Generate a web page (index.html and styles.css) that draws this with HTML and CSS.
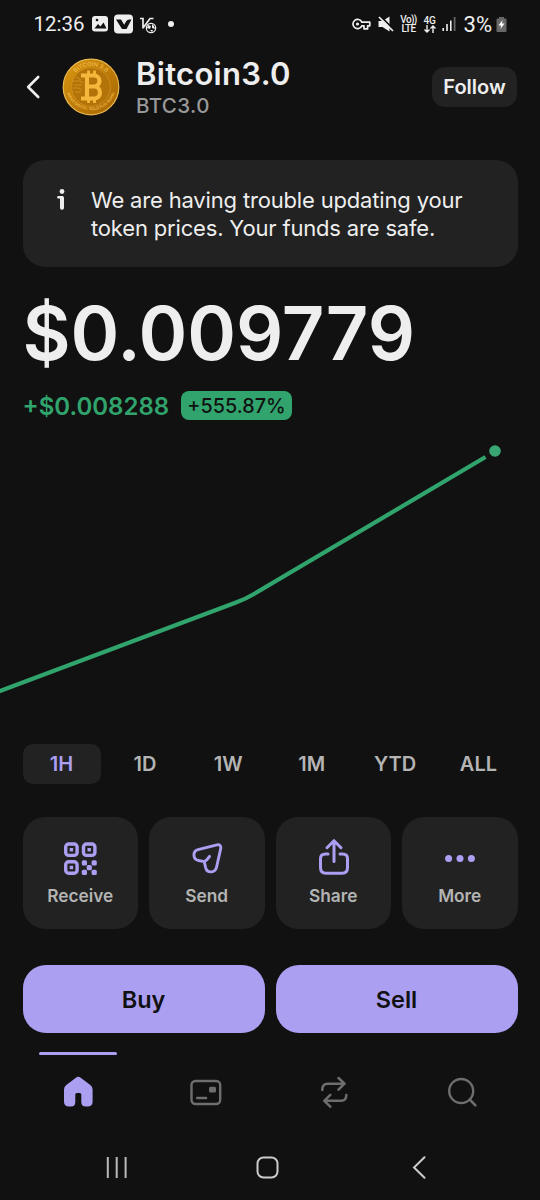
FILE: index.html
```html
<!DOCTYPE html>
<html lang="en">
<head>
    <meta charset="UTF-8">
    <meta name="viewport" content="width=device-width, initial-scale=1.0">
    <title>Bitcoin3.0</title>
    <link rel="stylesheet" href="styles.css">
</head>
<body>
    <!-- Status Bar -->
    <div class="status-bar">
        <div class="status-left">
            <span class="clock">12:36</span>
            <svg class="notifications" width="86" height="20" viewBox="0 0 86 20">
                <rect x="0" y="2" width="16" height="15.5" rx="3" fill="#eee"/>
                <path d="M2.5 14.5l3.5-4.500 2.500 2.500 3-4 3 6z" fill="#111"/>
                <circle cx="5" cy="6" r="1.300" fill="#111"/>
                <rect x="22" y="0.500" width="19" height="19" rx="4" fill="#eee"/>
                <path d="M24 5.500h5l3.200 5.300L34 7.500Q35 5.500 37.500 5.500H39.500L34.500 15H30Z" fill="#111"/>
                <path d="M48 4.500h3v10M51 14l7-9.500h3.500" fill="none" stroke="#eee" stroke-width="1.700"/>
                <circle cx="59" cy="14" r="4.700" fill="#111" stroke="#eee" stroke-width="1.200"/>
                <path d="M56 11l3 1-1 3-3-1zM60 10l2 2 1 3-3-1zM58 16h3l-1 2z" fill="#eee"/>
                <circle cx="79" cy="10" r="3" fill="#eee"/>
            </svg>
        </div>
        <div class="status-right">
            <svg class="vpn-key" width="19" height="12" viewBox="0 0 19 12">
                <path d="M9.800 4.200A4.600 4.600 0 1 0 9.800 7.800H12V10.800H15.600V7.800H17.800V4.200Z" fill="none" stroke="#eee" stroke-width="1.700" stroke-linejoin="round"/>
                <circle cx="5.500" cy="6" r="1.600" fill="#eee"/>
            </svg>
            <svg class="muted" width="16" height="16" viewBox="0 0 16 16">
                <path d="M0.500 5h4L11.500 0.500v15L4.500 11h-4z" fill="#eee"/>
                <path d="M1 -1.200L17 14.800" stroke="#111" stroke-width="1.800"/>
                <path d="M1 1L15 15" stroke="#eee" stroke-width="1.700"/>
            </svg>
            <div class="network volte"><span>Vo))</span><span>LTE</span></div>
            <div class="network">
                <span>4G</span>
                <svg width="12" height="8" viewBox="0 0 12 8">
                    <path d="M3 0v7M0.500 4.500L3 7l2.500-2.500M9 8V1M6.500 3.500L9 1l2.500 2.500" fill="none" stroke="#eee" stroke-width="1.400"/>
                </svg>
            </div>
            <svg class="signal" width="14" height="16" viewBox="0 0 14 16">
                <path d="M1.200 15v-3M5 15V8M8.800 15V4.500" stroke="#eee" stroke-width="1.600"/>
                <path d="M12.600 15V1" stroke="#666" stroke-width="1.800"/>
            </svg>
            <span class="battery-level">3%</span>
            <svg width="11" height="15" viewBox="0 0 11 15">
                <path d="M3 0h5v1.500h1.500q1 0 1 1v11.500q0 1-1 1h-8q-1 0-1-1V2.500q0-1 1-1H3z" fill="#686868"/>
                <path d="M6.500 3L2.500 8.500h2.500L4.500 12l4-5.500H6z" fill="#fff"/>
            </svg>
        </div>
    </div>

    <!-- Token Header -->
    <div class="header">
        <svg class="back" width="16" height="24" viewBox="0 0 16 24">
            <path d="M13.200 2L3.200 12l10 10" fill="none" stroke="#eee" stroke-width="2.600" stroke-linecap="round" stroke-linejoin="round"/>
        </svg>
        <svg class="coin" width="58" height="58" viewBox="0 0 58 58">
            <defs>
                <linearGradient id="gold" x1="0" y1="0" x2="1" y2="1">
                    <stop offset="0" stop-color="#dc9a12"/>
                    <stop offset="0.500" stop-color="#bd7c08"/>
                    <stop offset="1" stop-color="#a86604"/>
                </linearGradient>
                <path id="arc-top" d="M8 29a21 21 0 0 1 42 0"/>
                <path id="arc-bottom" d="M3.800 27a25.200 25.200 0 0 0 50.400 0"/>
            </defs>
            <circle cx="29" cy="29" r="27.800" fill="url(#gold)" stroke="#e9b952" stroke-width="1.200"/>
            <circle cx="29" cy="29" r="19.300" fill="#b27409" stroke="#d0931f" stroke-width="0.800"/>
            <text class="coin-text"><textPath href="#arc-top" startOffset="50%" text-anchor="middle">BITCOIN 3.0</textPath></text>
            <text class="coin-text small"><textPath href="#arc-bottom" startOffset="50%" text-anchor="middle">MAKE DIGITAL GOLD FUN AGAIN</textPath></text>
            <path d="M11 23h7l3 2M12 27h8M11 30h6l3 2M13 34h6M14 19l5 3" fill="none" stroke="#d6951f" stroke-width="0.900"/>
            <g fill="none" stroke="#f4b83c" stroke-width="4.200">
                <path d="M19 17.500H32a5.300 5.300 0 0 1 0 11H26M32 28.500a6 6 0 0 1 0 12H19M25 17.500v23"/>
                <path d="M26.500 12.500v5M32.500 12.500v5M26.500 40.500v4.500M32.500 40.500v4.500" stroke-width="2.800"/>
            </g>
        </svg>
        <div class="token-name">
            <h1>Bitcoin3.0</h1>
            <span>BTC3.0</span>
        </div>
        <button class="follow">Follow</button>
    </div>

    <!-- Main Content -->
    <div class="container">
        <div class="notice">
            <svg width="8" height="22" viewBox="0 0 8 22">
                <circle cx="5" cy="2.500" r="2.400" fill="#eee"/>
                <path d="M1.400 8.300H5V19" fill="none" stroke="#eee" stroke-width="2.600" stroke-linecap="round" stroke-linejoin="round"/>
                <path d="M5 9V18.800" stroke="#eee" stroke-width="4" stroke-linecap="round"/>
            </svg>
            <p>We are having trouble updating your<br>token prices. Your funds are safe.</p>
        </div>

        <div class="price">$0.009779</div>
        <div class="change">
            <span class="amount">+$0.008288</span>
            <span class="percent">+555.87%</span>
        </div>
    </div>

    <!-- Price Chart -->
    <svg class="chart" width="540" height="304" viewBox="0 0 540 304">
        <path d="M-4 252.500L236 162.500Q246 158.800 254 154L485.500 17" fill="none" stroke="#30a46c" stroke-width="4.200"/>
        <circle cx="495" cy="11" r="5.800" fill="#3aa674"/>
    </svg>

    <div class="container">
        <div class="ranges">
            <button class="active">1H</button>
            <button>1D</button>
            <button>1W</button>
            <button>1M</button>
            <button>YTD</button>
            <button>ALL</button>
        </div>

        <div class="actions">
            <button>
                <svg width="36" height="36" viewBox="0 0 36 36">
                    <g fill="none" stroke="#ab9ff2" stroke-width="3.400">
                        <rect x="3.700" y="3" width="11.400" height="11.400" rx="3"/>
                        <rect x="21.500" y="3" width="11.400" height="11.400" rx="3"/>
                        <rect x="3.700" y="20.800" width="11.400" height="11.400" rx="3"/>
                    </g>
                    <g fill="#ab9ff2">
                        <rect x="7.700" y="7" width="3.400" height="3.400"/>
                        <rect x="25.500" y="7" width="3.400" height="3.400"/>
                        <rect x="7.700" y="24.800" width="3.400" height="3.400"/>
                        <rect x="19.800" y="19.200" width="5.200" height="5.200" rx="1.500"/>
                        <rect x="29.600" y="19.200" width="5.200" height="5.200" rx="1.500"/>
                        <rect x="24.700" y="24" width="5.200" height="5.200" rx="1.500"/>
                        <rect x="19.800" y="28.800" width="5.200" height="5.200" rx="1.500"/>
                        <rect x="29.600" y="28.800" width="5.200" height="5.200" rx="1.500"/>
                    </g>
                </svg>
                Receive
            </button>
            <button>
                <svg width="36" height="36" viewBox="0 0 36 36">
                    <path d="M9 8.600L28 3.800C30.800 3.200 32.300 4.800 31.700 7.600L27.600 26C26.200 32.200 18.300 32.600 16.700 26.800L15.200 20.600L9.600 19.500C3.600 18.200 3.400 10.300 9 8.600ZM15.200 20.600C17.600 19.600 19 17.800 20.600 15.400" fill="none" stroke="#ab9ff2" stroke-width="2.900" stroke-linecap="round" stroke-linejoin="round"/>
                </svg>
                Send
            </button>
            <button>
                <svg width="36" height="40" viewBox="0 0 36 40">
                    <path d="M13 17H10.500Q5.500 17 5.500 21.500V30.500Q5.500 36.300 11 36.300H27Q32.500 36.300 32.500 30.500V21.500Q32.500 17 27.500 17H25M19 24.500V4M12 10.700L19 3.700L26 10.700" fill="none" stroke="#ab9ff2" stroke-width="3" stroke-linecap="round" stroke-linejoin="round"/>
                </svg>
                Share
            </button>
            <button>
                <svg width="36" height="36" viewBox="0 0 36 36">
                    <g fill="#ab9ff2">
                        <circle cx="6.600" cy="17.600" r="3.500"/>
                        <circle cx="18" cy="17.600" r="3.500"/>
                        <circle cx="29.400" cy="17.600" r="3.500"/>
                    </g>
                </svg>
                More
            </button>
        </div>

        <div class="trade">
            <button>Buy</button>
            <button>Sell</button>
        </div>
    </div>

    <!-- Bottom Tabs -->
    <div class="tabs">
        <a class="tab active">
            <svg width="32" height="32" viewBox="0 0 32 32">
                <path d="M13.900 1.700Q16.300 0 18.700 1.700L28.300 9Q30.600 10.800 30.600 13.500V25.500Q30.600 30.500 25.600 30.500H23.800Q19.300 30.500 19.300 26V18.500Q19.300 17 17.800 17H14.800Q13.300 17 13.300 18.500V26Q13.300 30.500 8.800 30.500H7Q2 30.500 2 25.500V13.500Q2 10.800 4.300 9Z" fill="#ab9ff2"/>
            </svg>
        </a>
        <a class="tab">
            <svg width="32" height="32" viewBox="0 0 32 32">
                <rect x="1.500" y="5" width="28.700" height="23" rx="4" fill="none" stroke="#6e6e6e" stroke-width="2.400"/>
                <rect x="19" y="10.800" width="7" height="5.700" rx="1.500" fill="#6e6e6e"/>
                <path d="M7.300 22H16" stroke="#6e6e6e" stroke-width="2.600" stroke-linecap="round"/>
            </svg>
        </a>
        <a class="tab">
            <svg width="32" height="32" viewBox="0 0 32 32">
                <path d="M4.300 14C4.300 9.500 6 7.700 9.500 7.700H26.500M20.500 2L26.500 7.700L20.500 13.700M28.300 19C28.300 23 26.500 24.800 23.200 24.800H6.300M12.300 18.800L6.300 24.800L12.300 30.700" fill="none" stroke="#6e6e6e" stroke-width="2.500" stroke-linecap="round" stroke-linejoin="round"/>
            </svg>
        </a>
        <a class="tab">
            <svg width="32" height="32" viewBox="0 0 32 32">
                <circle cx="15.200" cy="15" r="12" fill="none" stroke="#6e6e6e" stroke-width="2.400"/>
                <path d="M23.700 23.500L29.400 29.300" stroke="#6e6e6e" stroke-width="2.600" stroke-linecap="round"/>
            </svg>
        </a>
    </div>

    <!-- System Navigation -->
    <div class="system-nav">
        <svg width="24" height="24" viewBox="0 0 24 24">
            <path d="M3.800 2v21M12.700 2v21M21.600 2v21" stroke="#bbb" stroke-width="2"/>
        </svg>
        <svg width="24" height="24" viewBox="0 0 24 24">
            <rect x="1.500" y="2.500" width="20" height="20" rx="6" fill="none" stroke="#ccc" stroke-width="2"/>
        </svg>
        <svg width="24" height="24" viewBox="0 0 24 24">
            <path d="M16.500 2.300L6 12.500L16.500 22.800" fill="none" stroke="#ccc" stroke-width="2" stroke-linecap="round"/>
        </svg>
    </div>
</body>
</html>
```
FILE: styles.css
```css
/* Basic Reset */
* {
    box-sizing: border-box;
}

body {
    margin: 0;
    width: 540px;
    height: 1200px;
    overflow: hidden;
    display: flex;
    flex-direction: column;
    font-family: Inter, sans-serif;
    background-color: #111;
    color: #eee;
}

button {
    padding: 0;
    border: none;
    font-family: inherit;
    cursor: pointer;
}

svg {
    display: block;
    flex: none;
}

/* Status Bar */
.status-bar {
    height: 48px;
    padding: 0 33px 0 33.5px;
    display: flex;
    align-items: center;
    justify-content: space-between;
    font-family: Roboto, sans-serif;
}

.status-left,
.status-right {
    display: flex;
    align-items: center;
}

.clock {
    width: 58px;
    font-size: 20.5px;
}

.muted {
    margin-left: 7px;
}

.network {
    width: 14px;
    margin-left: 6px;
    display: flex;
    flex-direction: column;
    align-items: center;
    font-size: 10px;
    font-weight: 500;
    line-height: 9px;
    letter-spacing: -0.2px;
}

.volte {
    width: 16px;
    margin-left: 7px;
    letter-spacing: -0.6px;
}

.signal {
    margin-left: 5px;
}

.battery-level {
    margin: 0 4px 0 8px;
    font-size: 22px;
}

/* Token Header */
.header {
    height: 78px;
    padding: 0 23px 0 25px;
    display: flex;
    align-items: center;
}

.coin {
    margin-left: 20.5px;
}

.coin-text {
    font-size: 5.8px;
    font-weight: 600;
    fill: #ecb545;
}

.coin-text.small {
    font-size: 3.9px;
}

.token-name {
    flex: 1;
    margin-left: 16.5px;
}

.token-name h1 {
    margin: 3px 0 0;
    font-size: 31px;
    font-weight: 600;
    line-height: 34px;
    letter-spacing: 0.3px;
}

.token-name span {
    display: block;
    font-size: 20.5px;
    font-weight: 500;
    line-height: 29px;
    letter-spacing: 0.4px;
    color: #999;
}

.follow {
    width: 85px;
    height: 40px;
    border-radius: 13px;
    background-color: #222;
    color: #eee;
    font-size: 20px;
    font-weight: 600;
}

.container {
    padding: 0 22.5px;
}

/* Notice */
.notice {
    height: 107px;
    margin-top: 34px;
    padding: 26px 34.5px;
    display: flex;
    border-radius: 22px;
    background-color: #222;
}

.notice svg {
    margin-top: 3px;
}

.notice p {
    margin: 0 0 0 26px;
    font-size: 22px;
    line-height: 28.4px;
    letter-spacing: -0.17px;
    white-space: nowrap;
}

/* Price */
.price {
    height: 88px;
    margin-top: 22px;
    font-size: 74px;
    font-weight: 600;
    line-height: 88px;
    letter-spacing: -0.1px;
}

.change {
    height: 29px;
    margin-top: 14px;
    display: flex;
    align-items: center;
    gap: 12px;
}

.amount {
    width: 146.5px;
    padding-top: 2px;
    font-size: 24px;
    font-weight: 600;
    color: #30a46c;
}

.percent {
    width: 111px;
    height: 29px;
    border-radius: 8px;
    background-color: #30a46c;
    color: #111;
    font-size: 19.8px;
    font-weight: 500;
    line-height: 31px;
    text-align: center;
}

.chart {
    margin-top: 20px;
}

/* Time Ranges */
.ranges {
    display: grid;
    grid-template-columns: repeat(6, 78px);
    justify-content: space-between;
}

.ranges button {
    height: 40px;
    border-radius: 10px;
    background: none;
    color: #b4b4b4;
    font-size: 20px;
    font-weight: 600;
}

.ranges .active {
    background-color: #222;
    color: #ab9ff2;
}

/* Action Buttons */
.actions {
    margin-top: 33px;
    display: grid;
    grid-template-columns: repeat(4, 1fr);
    gap: 11px;
}

.actions button {
    height: 112px;
    padding-bottom: 22px;
    display: flex;
    flex-direction: column;
    align-items: center;
    justify-content: flex-end;
    border-radius: 22px;
    background-color: #222;
    color: #b4b4b4;
    font-size: 17.3px;
    font-weight: 600;
    line-height: 23px;
}

.actions svg {
    margin-bottom: 7px;
}

/* Buy and Sell */
.trade {
    margin-top: 36px;
    display: grid;
    grid-template-columns: 1fr 1fr;
    gap: 11px;
}

.trade button {
    height: 68px;
    border-radius: 23px;
    background-color: #ab9ff2;
    color: #111;
    font-size: 23.5px;
    font-weight: 600;
}

/* Bottom Tabs */
.tabs {
    height: 80px;
    margin-top: 19px;
    padding: 0 14px;
    display: grid;
    grid-template-columns: repeat(4, 1fr);
}

.tab {
    display: flex;
    flex-direction: column;
    align-items: center;
    padding-top: 24px;
}

.tab.active {
    padding-top: 0;
}

.tab.active::before {
    content: "";
    width: 78px;
    height: 3px;
    margin-bottom: 21px;
    border-radius: 2px;
    background-color: #ab9ff2;
}

/* System Navigation */
.system-nav {
    padding: 23px 108px 0 104px;
    display: flex;
    justify-content: space-between;
}
```
